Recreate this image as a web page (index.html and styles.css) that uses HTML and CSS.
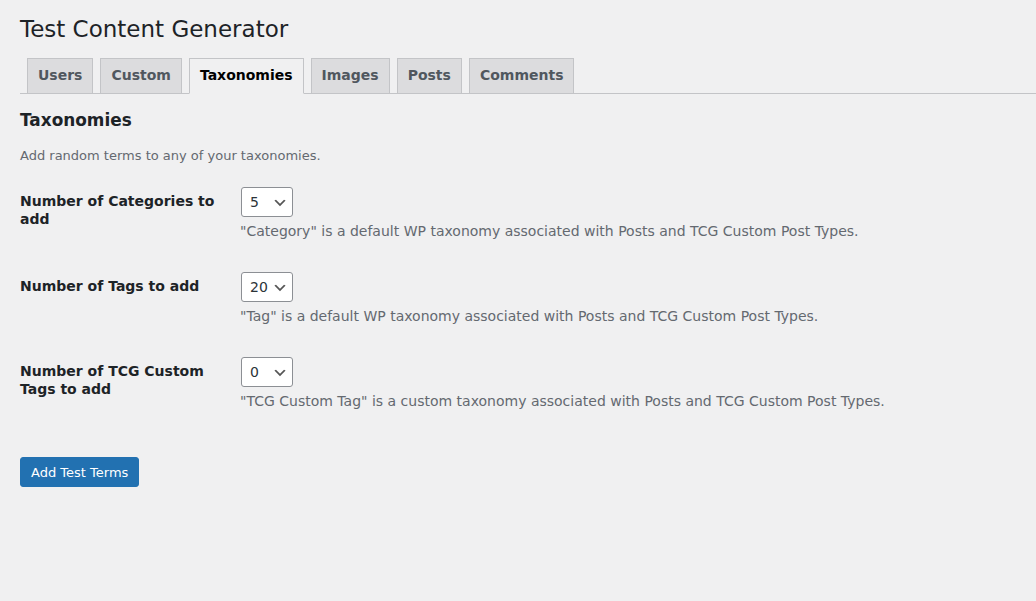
FILE: index.html
```html
<!DOCTYPE html>
<html lang="en">
<head>
<meta charset="utf-8">
<title>Test Content Generator</title>
<link rel="stylesheet" href="styles.css">
</head>
<body>
<div class="wrap">
  <h1 class="page-title">Test Content Generator</h1>
  <nav class="nav-tab-wrapper">
    <a class="nav-tab" href="#">Users</a>
    <a class="nav-tab" href="#">Custom</a>
    <a class="nav-tab nav-tab-active" href="#">Taxonomies</a>
    <a class="nav-tab" href="#">Images</a>
    <a class="nav-tab" href="#">Posts</a>
    <a class="nav-tab" href="#">Comments</a>
  </nav>

  <h2 class="section-title">Taxonomies</h2>
  <p class="intro">Add random terms to any of your taxonomies.</p>

  <form class="tcg-form">
    <table class="form-table">
      <tbody>
        <tr>
          <th scope="row">Number of Categories to add</th>
          <td>
            <span class="select-wrap">
              <select class="num-select"><option>5</option><option>10</option><option>20</option></select>
              <svg class="chev" viewBox="0 0 20 20" width="16" height="16"><path d="M5 6l5 5 5-5 2 1-7 7-7-7 2-1z" fill="#555"/></svg>
            </span>
            <p class="description">"Category" is a default WP taxonomy associated with Posts and TCG Custom Post Types.</p>
          </td>
        </tr>
        <tr>
          <th scope="row">Number of Tags to add</th>
          <td>
            <span class="select-wrap">
              <select class="num-select"><option>20</option><option>5</option><option>10</option></select>
              <svg class="chev" viewBox="0 0 20 20" width="16" height="16"><path d="M5 6l5 5 5-5 2 1-7 7-7-7 2-1z" fill="#555"/></svg>
            </span>
            <p class="description">"Tag" is a default WP taxonomy associated with Posts and TCG Custom Post Types.</p>
          </td>
        </tr>
        <tr>
          <th scope="row">Number of TCG Custom Tags to add</th>
          <td>
            <span class="select-wrap">
              <select class="num-select"><option>0</option><option>5</option><option>10</option></select>
              <svg class="chev" viewBox="0 0 20 20" width="16" height="16"><path d="M5 6l5 5 5-5 2 1-7 7-7-7 2-1z" fill="#555"/></svg>
            </span>
            <p class="description">"TCG Custom Tag" is a custom taxonomy associated with Posts and TCG Custom Post Types.</p>
          </td>
        </tr>
      </tbody>
    </table>
    <p class="submit"><button type="button" class="button-primary">Add Test Terms</button></p>
  </form>
</div>
</body>
</html>
```

FILE: styles.css
```css
html, body {
  margin: 0;
  padding: 0;
  background: #f0f0f1;
}

body {
  font-family: "DejaVu Sans", "Noto Sans", sans-serif;
  font-size: 13px;
  line-height: 1.4em;
  color: #3c434a;
}

.wrap {
  padding: 6px 0 0 20px;
}

.page-title {
  margin: 0;
  padding: 9px 0 4px;
  font-size: 23px;
  font-weight: 400;
  line-height: 1.3;
  color: #1d2327;
}

.nav-tab-wrapper {
  display: flex;
  align-items: flex-end;
  padding-top: 9px;
  border-bottom: 1px solid #c3c4c7;
}

.nav-tab {
  display: block;
  margin-left: 7px;
  padding: 4px 10px 6px;
  border: 1px solid #c3c4c7;
  border-bottom: none;
  background: #dcdcde;
  color: #50575e;
  font-size: 14px;
  font-weight: 700;
  line-height: 24px;
  text-decoration: none;
  white-space: nowrap;
}

.nav-tab-active {
  margin-bottom: -1px;
  border-bottom: 1px solid #f0f0f1;
  background: #f0f0f1;
  color: #000;
}

.section-title {
  margin: 16.9px 0;
  font-size: 16.9px;
  font-weight: 700;
  line-height: 18.2px;
  color: #1d2327;
}

.intro {
  margin: 13px 0 6.5px;
  font-size: 13px;
  line-height: 1.5;
  color: #646970;
}

.tcg-form {
  margin: 0;
}

.form-table {
  border-collapse: collapse;
  margin: 0;
  width: 100%;
}

.form-table th {
  width: 200px;
  padding: 20px 10px 20px 0;
  vertical-align: top;
  text-align: left;
  font-size: 14px;
  font-weight: 700;
  line-height: 1.3;
  color: #1d2327;
}

.form-table td {
  padding: 15px 10px;
  vertical-align: middle;
  font-size: 14px;
  line-height: 1.3;
}

.select-wrap {
  position: relative;
  display: inline-block;
  vertical-align: middle;
}

.num-select {
  -webkit-appearance: none;
  appearance: none;
  box-sizing: border-box;
  display: block;
  width: 52px;
  height: 30px;
  margin: 0 1px;
  padding: 0 24px 0 8px;
  border: 1px solid #8c8f94;
  border-radius: 3px;
  background: #fff;
  color: #2c3338;
  font-family: "DejaVu Sans", "Noto Sans", sans-serif;
  font-size: 14px;
  line-height: 28px;
}

.chev {
  position: absolute;
  right: 6px;
  top: 8px;
  pointer-events: none;
}

.description {
  margin: 4px 0 0;
  font-size: 14px;
  line-height: 1.5;
  color: #646970;
}

.submit {
  margin: 20px 0 0;
  padding-top: 10px;
}

.button-primary {
  box-sizing: border-box;
  height: 30px;
  margin: 0;
  padding: 1px 10px 0;
  border: 1px solid #2271b1;
  border-radius: 3px;
  background: #2271b1;
  color: #fff;
  font-family: "DejaVu Sans", "Noto Sans", sans-serif;
  font-size: 13px;
  line-height: 27px;
  cursor: pointer;
}
```
